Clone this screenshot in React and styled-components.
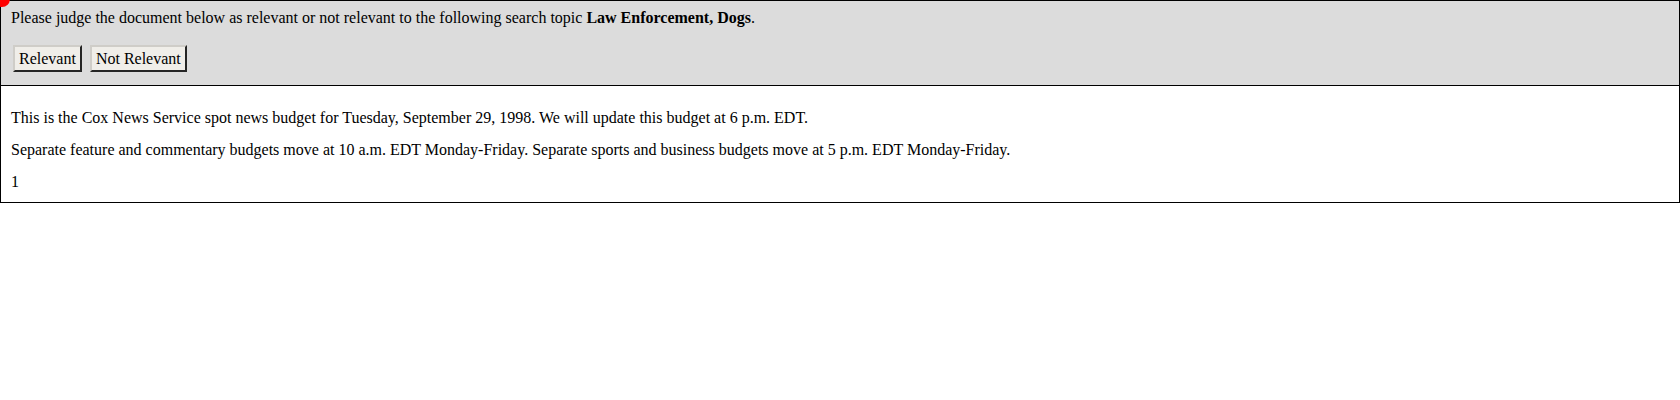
import React from "react";
import styled, { createGlobalStyle } from "styled-components";

const GlobalStyle = createGlobalStyle`
  html, body {
    margin: 0;
    padding: 0;
    background: #ffffff;
  }
  body {
    font-family: "Liberation Serif", "Times New Roman", serif;
    font-size: 16px;
    color: #000000;
  }
`;

const Frame = styled.div`
  position: relative;
  border: 1px solid #000000;
`;

const Marker = styled.span`
  position: absolute;
  top: -10px;
  left: -7px;
  width: 16px;
  height: 16px;
  border-radius: 50%;
  background: #ff0000;
`;

const Header = styled.div`
  background: #dcdcdc;
  border-bottom: 1px solid #000000;
  padding: 8px 10px 13px;
`;

const Prompt = styled.div`
  line-height: 18px;
`;

const ButtonRow = styled.div`
  display: flex;
  gap: 8px;
  margin-top: 18px;
  padding-left: 2px;
`;

const JudgeButton = styled.button`
  font-family: "Liberation Serif", "Times New Roman", serif;
  font-size: 16px;
  line-height: 19px;
  height: 27px;
  padding: 2px 4px;
  background: #f0eee9;
  color: #000000;
  border: 2px outset #cfcdc8;
  border-right-color: #7a7a7a;
  border-bottom-color: #7a7a7a;
  cursor: pointer;
`;

const Content = styled.div`
  display: flex;
  flex-direction: column;
  gap: 14px;
  padding: 23px 10px 11px;
`;

const Paragraph = styled.p`
  margin: 0;
  line-height: 18px;
`;

const paragraphs = [
  "This is the Cox News Service spot news budget for Tuesday, September 29, 1998. We will update this budget at 6 p.m. EDT.",
  "Separate feature and commentary budgets move at 10 a.m. EDT Monday-Friday. Separate sports and business budgets move at 5 p.m. EDT Monday-Friday.",
  "1",
];

export default function App() {
  return (
    <>
      <GlobalStyle />
      <Frame>
        <Marker />
        <Header>
          <Prompt>
            Please judge the document below as relevant or not relevant to the
            following search topic <b>Law Enforcement, Dogs</b>.
          </Prompt>
          <ButtonRow>
            <JudgeButton>Relevant</JudgeButton>
            <JudgeButton>Not Relevant</JudgeButton>
          </ButtonRow>
        </Header>
        <Content>
          {paragraphs.map((text, i) => (
            <Paragraph key={i}>{text}</Paragraph>
          ))}
        </Content>
      </Frame>
    </>
  );
}
